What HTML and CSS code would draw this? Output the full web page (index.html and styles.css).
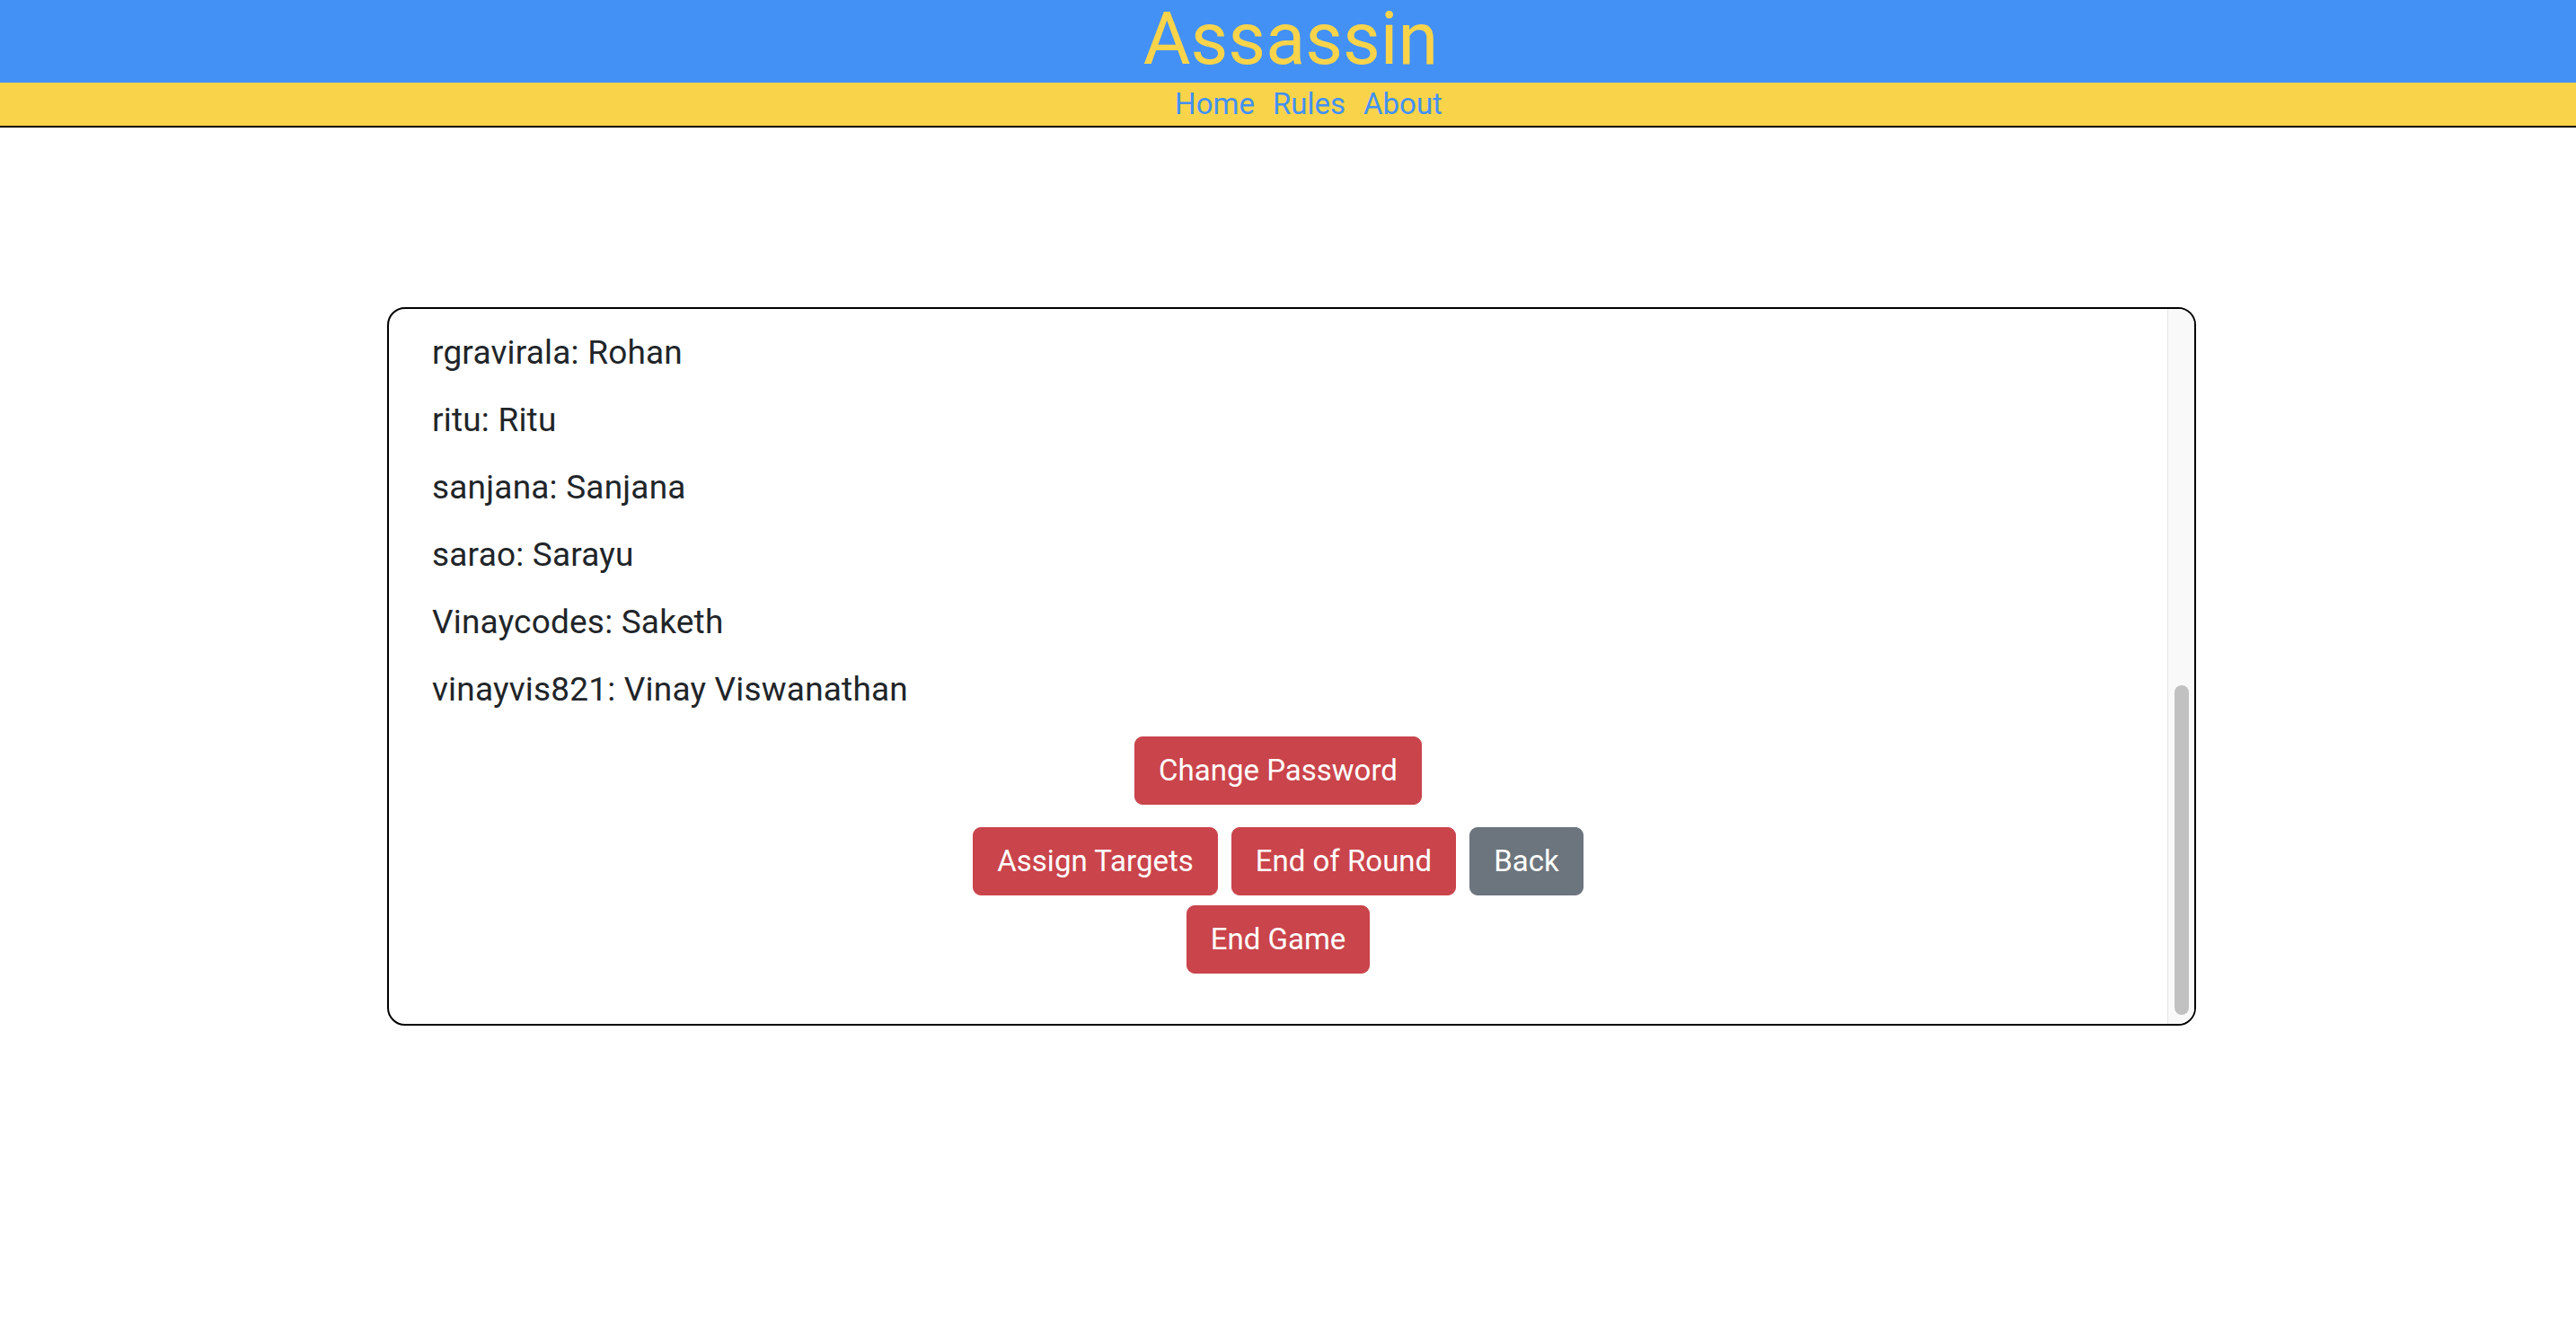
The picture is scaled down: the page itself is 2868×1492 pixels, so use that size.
FILE: index.html
```html
<!DOCTYPE html>
<html lang="en">
<head>
<meta charset="utf-8">
<title>Assassin</title>
<link rel="stylesheet" href="styles.css">
</head>
<body>
<header class="site-header">
  <h1 class="site-title">Assassin</h1>
  <nav class="site-nav">
    <a class="nav-link" href="#">Home</a>
    <a class="nav-link" href="#">Rules</a>
    <a class="nav-link" href="#">About</a>
  </nav>
</header>
<main class="page">
  <section class="panel">
    <div class="panel-body">
      <p class="player">rgravirala: Rohan</p>
      <p class="player">ritu: Ritu</p>
      <p class="player">sanjana: Sanjana</p>
      <p class="player">sarao: Sarayu</p>
      <p class="player">Vinaycodes: Saketh</p>
      <p class="player player-last">vinayvis821: Vinay Viswanathan</p>
      <div class="btn-row btn-row-top">
        <button class="btn btn-danger" type="button">Change Password</button>
      </div>
      <div class="btn-row btn-row-mid">
        <button class="btn btn-danger" type="button">Assign Targets</button>
        <button class="btn btn-danger" type="button">End of Round</button>
        <button class="btn btn-secondary" type="button">Back</button>
      </div>
      <div class="btn-row">
        <button class="btn btn-danger" type="button">End Game</button>
      </div>
    </div>
    <div class="scroll-track">
      <div class="scroll-thumb"></div>
    </div>
  </section>
</main>
</body>
</html>
```

FILE: styles.css
```css
* {
  box-sizing: border-box;
}

html, body {
  margin: 0;
  padding: 0;
  background: #ffffff;
  font-family: Roboto, "Liberation Sans", sans-serif;
  color: #212529;
}

.site-header {
  text-align: center;
}

.site-title {
  margin: 0;
  height: 92px;
  background: #4391f5;
  color: #f9d44a;
  font-size: 81px;
  font-weight: 400;
  line-height: 88px;
  padding: 0 0 4px 6px;
}

.site-nav {
  height: 50px;
  background: #f9d44a;
  border-bottom: 2px solid #000000;
  display: flex;
  justify-content: center;
  gap: 20px;
  padding-left: 46px;
}

.nav-link {
  color: #4391f5;
  text-decoration: none;
  font-size: 33px;
  line-height: 48px;
}

.page {
  padding-top: 200px;
  padding-left: 8px;
}

.panel {
  width: 2014px;
  height: 800px;
  margin: 0 auto;
  border: 2px solid #000000;
  border-radius: 20px;
  overflow: hidden;
  display: flex;
}

.panel-body {
  flex: 1;
  display: flex;
  flex-direction: column;
  justify-content: flex-end;
  padding: 0 48px 56px 48px;
}

.player {
  margin: 0 0 21px 0;
  font-size: 37px;
  line-height: 54px;
  letter-spacing: 0.2px;
}

.player-last {
  margin-bottom: 25px;
}

.btn-row {
  display: flex;
  justify-content: center;
  gap: 15px;
}

.btn-row-top {
  margin-bottom: 25px;
}

.btn-row-mid {
  margin-bottom: 11px;
}

.btn {
  font-family: Roboto, "Liberation Sans", sans-serif;
  font-size: 33px;
  line-height: 50px;
  padding: 12px 26px;
  border: 1px solid transparent;
  border-radius: 9px;
  color: #ffffff;
  cursor: pointer;
}

.btn-danger {
  background: #ca444b;
  border-color: #ca444b;
}

.btn-secondary {
  background: #6c757d;
  border-color: #6c757d;
}

.scroll-track {
  flex: none;
  width: 30px;
  background: #f9f9f9;
  border-left: 1px solid #e6e6e6;
  display: flex;
  flex-direction: column;
  justify-content: flex-end;
  align-items: center;
  padding-bottom: 10px;
}

.scroll-thumb {
  width: 16px;
  height: 367px;
  background: #c1c1c1;
  border-radius: 8px;
}
```
